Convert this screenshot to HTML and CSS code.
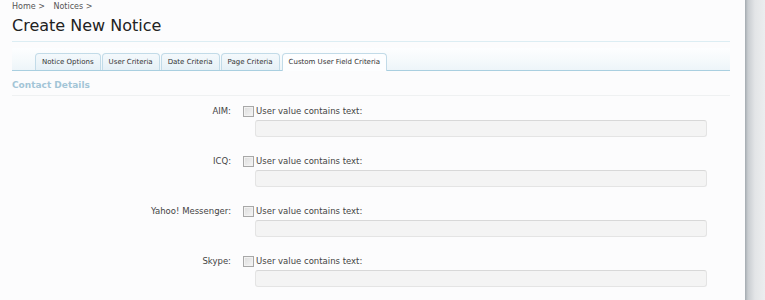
FILE: index.html
```html
<!DOCTYPE html>
<html lang="en">
	<head>
		<meta charset="utf-8">
		<title>Create New Notice</title>
		<link rel="stylesheet" href="styles.css">
	</head>

	<body>
		<div class="page">
			<div class="breadcrumb">
				<span>Home &gt;</span>
				<span>Notices &gt;</span>
			</div>
			<h1>Create New Notice</h1>

			<div class="tabs">
				<div class="tab">Notice Options</div>
				<div class="tab">User Criteria</div>
				<div class="tab">Date Criteria</div>
				<div class="tab">Page Criteria</div>
				<div class="tab active">Custom User Field Criteria</div>
			</div>

			<h2>Contact Details</h2>

			<div class="row">
				<div class="label">AIM:</div>
				<div class="field">
					<label class="check"><span class="box"></span>User value contains text:</label>
					<div class="input"></div>
				</div>
			</div>
			<div class="row">
				<div class="label">ICQ:</div>
				<div class="field">
					<label class="check"><span class="box"></span>User value contains text:</label>
					<div class="input"></div>
				</div>
			</div>
			<div class="row">
				<div class="label">Yahoo! Messenger:</div>
				<div class="field">
					<label class="check"><span class="box"></span>User value contains text:</label>
					<div class="input"></div>
				</div>
			</div>
			<div class="row">
				<div class="label">Skype:</div>
				<div class="field">
					<label class="check"><span class="box"></span>User value contains text:</label>
					<div class="input"></div>
				</div>
			</div>
		</div>
		<div class="edge"></div>
	</body>
</html>
```

FILE: styles.css
```css
html {
	height: 100%;
}

body {
	margin: 0;
	height: 100%;
	display: flex;
	flex-direction: row;
	font-family: 'DejaVu Sans', 'Liberation Sans', sans-serif;
	color: #333;
	overflow: hidden;
}

.page {
	width: 745px;
	flex-shrink: 0;
	background: #fcfcfd;
	padding: 0 15px 0 12px;
	box-sizing: border-box;
}

.edge {
	flex: 1;
	background: linear-gradient(to right, #a3aab0 0, #c9cdd1 3px, #e3e5e7 10px, #eceeef 100%);
}

.breadcrumb {
	font-size: 8px;
	color: #555;
	padding-top: 1px;
	height: 11px;
	line-height: 11px;
}

.breadcrumb span {
	margin-right: 6px;
}

h1 {
	font-family: 'DejaVu Sans', sans-serif;
	font-weight: normal;
	font-size: 16px;
	color: #222;
	margin: 0;
	padding: 5px 0 6px 0;
	line-height: 18px;
	border-bottom: 1px solid #dcedf3;
}

.tabs {
	margin-top: 6px;
	height: 17px;
	padding: 5px 0 0 23px;
	display: flex;
	flex-direction: row;
	align-items: flex-end;
	background: linear-gradient(to bottom, #fdfeff 0, #f6fafc 50%, #edf5f9 100%);
	border-bottom: 1px solid #a9cfe0;
}

.tab {
	height: 16px;
	line-height: 16px;
	padding: 0 6px;
	margin-right: 1px;
	font-size: 7px;
	color: #333;
	background: linear-gradient(to bottom, #f4f9fc, #e5f0f6);
	border: 1px solid #c2dbe8;
	border-bottom: none;
	border-radius: 4px 4px 0 0;
	white-space: nowrap;
}

.tab.active {
	background: #fdfeff;
	height: 17px;
	margin-bottom: -1px;
	margin-left: 1px;
}

h2 {
	font-size: 9px;
	font-weight: bold;
	color: #a3c5d7;
	margin: 8px 0 0 0;
	padding-bottom: 3px;
	line-height: 13px;
	border-bottom: 1px solid #eff1f2;
}

.row {
	display: grid;
	grid-template-columns: 231px 1fr;
	margin-top: 8px;
}

.row + .row {
	margin-top: 17px;
}

.label {
	text-align: right;
	font-size: 8.5px;
	line-height: 14px;
	color: #444;
	padding-right: 12px;
}

.field {
	display: flex;
	flex-direction: column;
}

.check {
	display: flex;
	flex-direction: row;
	align-items: center;
	font-size: 8.5px;
	line-height: 14px;
	color: #444;
}

.box {
	width: 9px;
	height: 9px;
	border: 1px solid #a8a8a8;
	background: linear-gradient(to bottom right, #dcdcdc, #f6f6f6);
	margin-right: 2px;
	box-shadow: inset 0 0 0 1px #f2f2f2;
}

.input {
	margin: 2px 0 0 12px;
	width: 450px;
	height: 15px;
	background: #f4f4f4;
	border: 1px solid #e4e4e4;
	border-top-color: #d8d8d8;
	border-radius: 3px;
}
```
